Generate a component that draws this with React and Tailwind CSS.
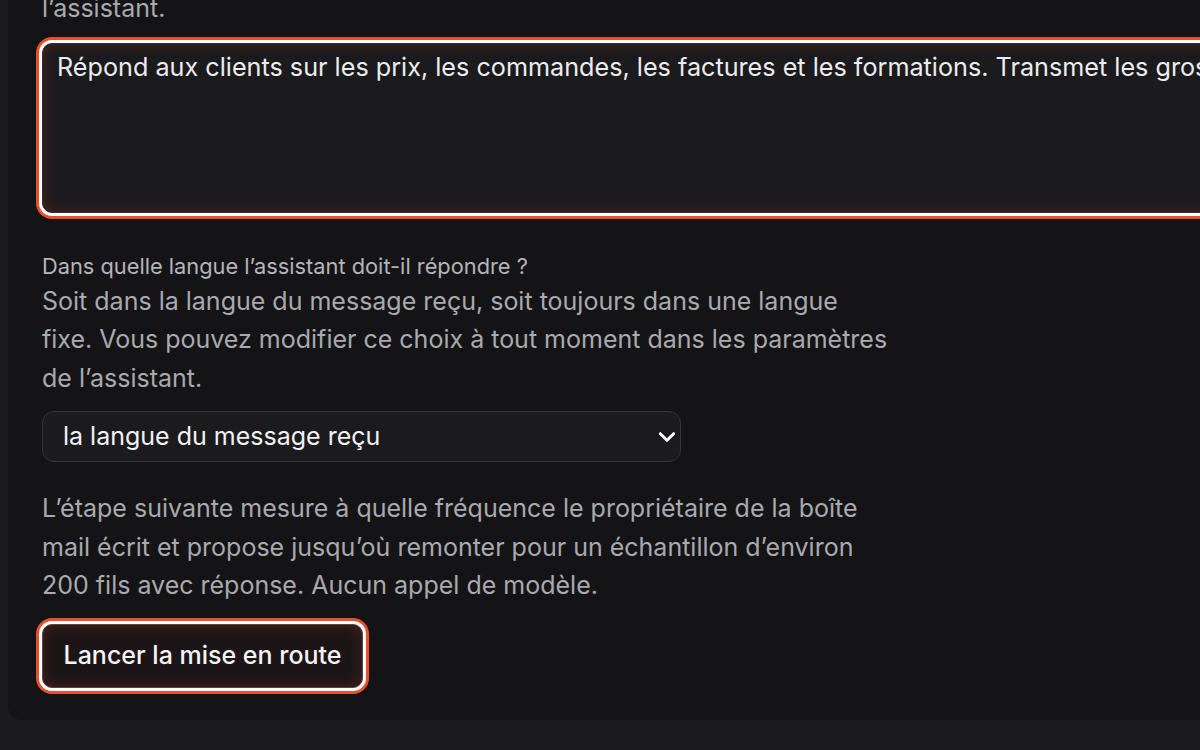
import { useState } from 'react';

const ring =
  'shadow-[0_0_0_3px_#ffffff,0_0_0_6px_#e8502d,inset_0_0_14px_rgba(228,81,47,0.22)]';

export default function App() {
  const [lang, setLang] = useState('recu');

  return (
    <div
      className="w-[1200px] h-[750px] overflow-hidden bg-[#1c1c1f]"
      style={{ fontFamily: 'Inter, "Noto Sans", sans-serif' }}
    >
      <div className="ml-2 w-[2000px] rounded-b-[14px] bg-[#141416] px-[34px] pb-[32px]">
        <p className="-mt-[11px] text-[25px] leading-[38.5px] text-[#a9a9ae]">l’assistant.</p>

        <textarea
          readOnly
          className={`mt-[15px] block w-[1932px] h-[170px] resize-none rounded-[10px] border border-[#3a2a2a] bg-[#1b1a1d] px-[14px] pt-[5px] text-[25.2px] leading-[36px] text-[#ececee] outline-none ${ring}`}
          defaultValue="Répond aux clients sur les prix, les commandes, les factures et les formations. Transmet les gros dossiers à l’équipe commerciale."
        />

        <label className="mt-[41px] block text-[21.8px] leading-[25px] text-[#b4b4b9]">
          Dans quelle langue l’assistant doit-il répondre ?
        </label>
        <p className="mt-[3px] max-w-[852px] text-[25px] leading-[38.5px] text-[#a9a9ae]">
          Soit dans la langue du message reçu, soit toujours dans une langue fixe. Vous pouvez modifier ce choix à tout
          moment dans les paramètres de l’assistant.
        </p>

        <div className="relative mt-[14px] w-[639px]">
          <select
            value={lang}
            onChange={(e) => setLang(e.target.value)}
            className="block h-[51px] w-full appearance-none rounded-[12px] border border-[#34343a] bg-[#1b1b1e] pl-[20px] pr-10 text-[25px] text-[#f1f1f3] outline-none"
          >
            <option value="recu">la langue du message reçu</option>
            <option value="fr">français</option>
            <option value="en">anglais</option>
          </select>
          <svg
            className="pointer-events-none absolute right-[4px] top-1/2 -translate-y-1/2"
            width="20"
            height="20"
            viewBox="0 0 24 24"
            fill="none"
            stroke="#ffffff"
            strokeWidth="3.5"
            strokeLinecap="round"
            strokeLinejoin="round"
          >
            <path d="M4 8l8 8 8-8" />
          </svg>
        </div>

        <p className="mt-[27px] max-w-[852px] text-[25px] leading-[38.5px] text-[#a9a9ae]">
          L’étape suivante mesure à quelle fréquence le propriétaire de la boîte mail écrit et propose jusqu’où remonter
          pour un échantillon d’environ 200 fils avec réponse. Aucun appel de modèle.
        </p>

        <button
          className={`mt-[19px] h-[64px] w-[321px] rounded-[10px] border border-[#5a4446] bg-[#1c1517] text-[25px] font-medium text-[#f4f4f5] ${ring}`}
        >
          Lancer la mise en route
        </button>
      </div>
    </div>
  );
}
